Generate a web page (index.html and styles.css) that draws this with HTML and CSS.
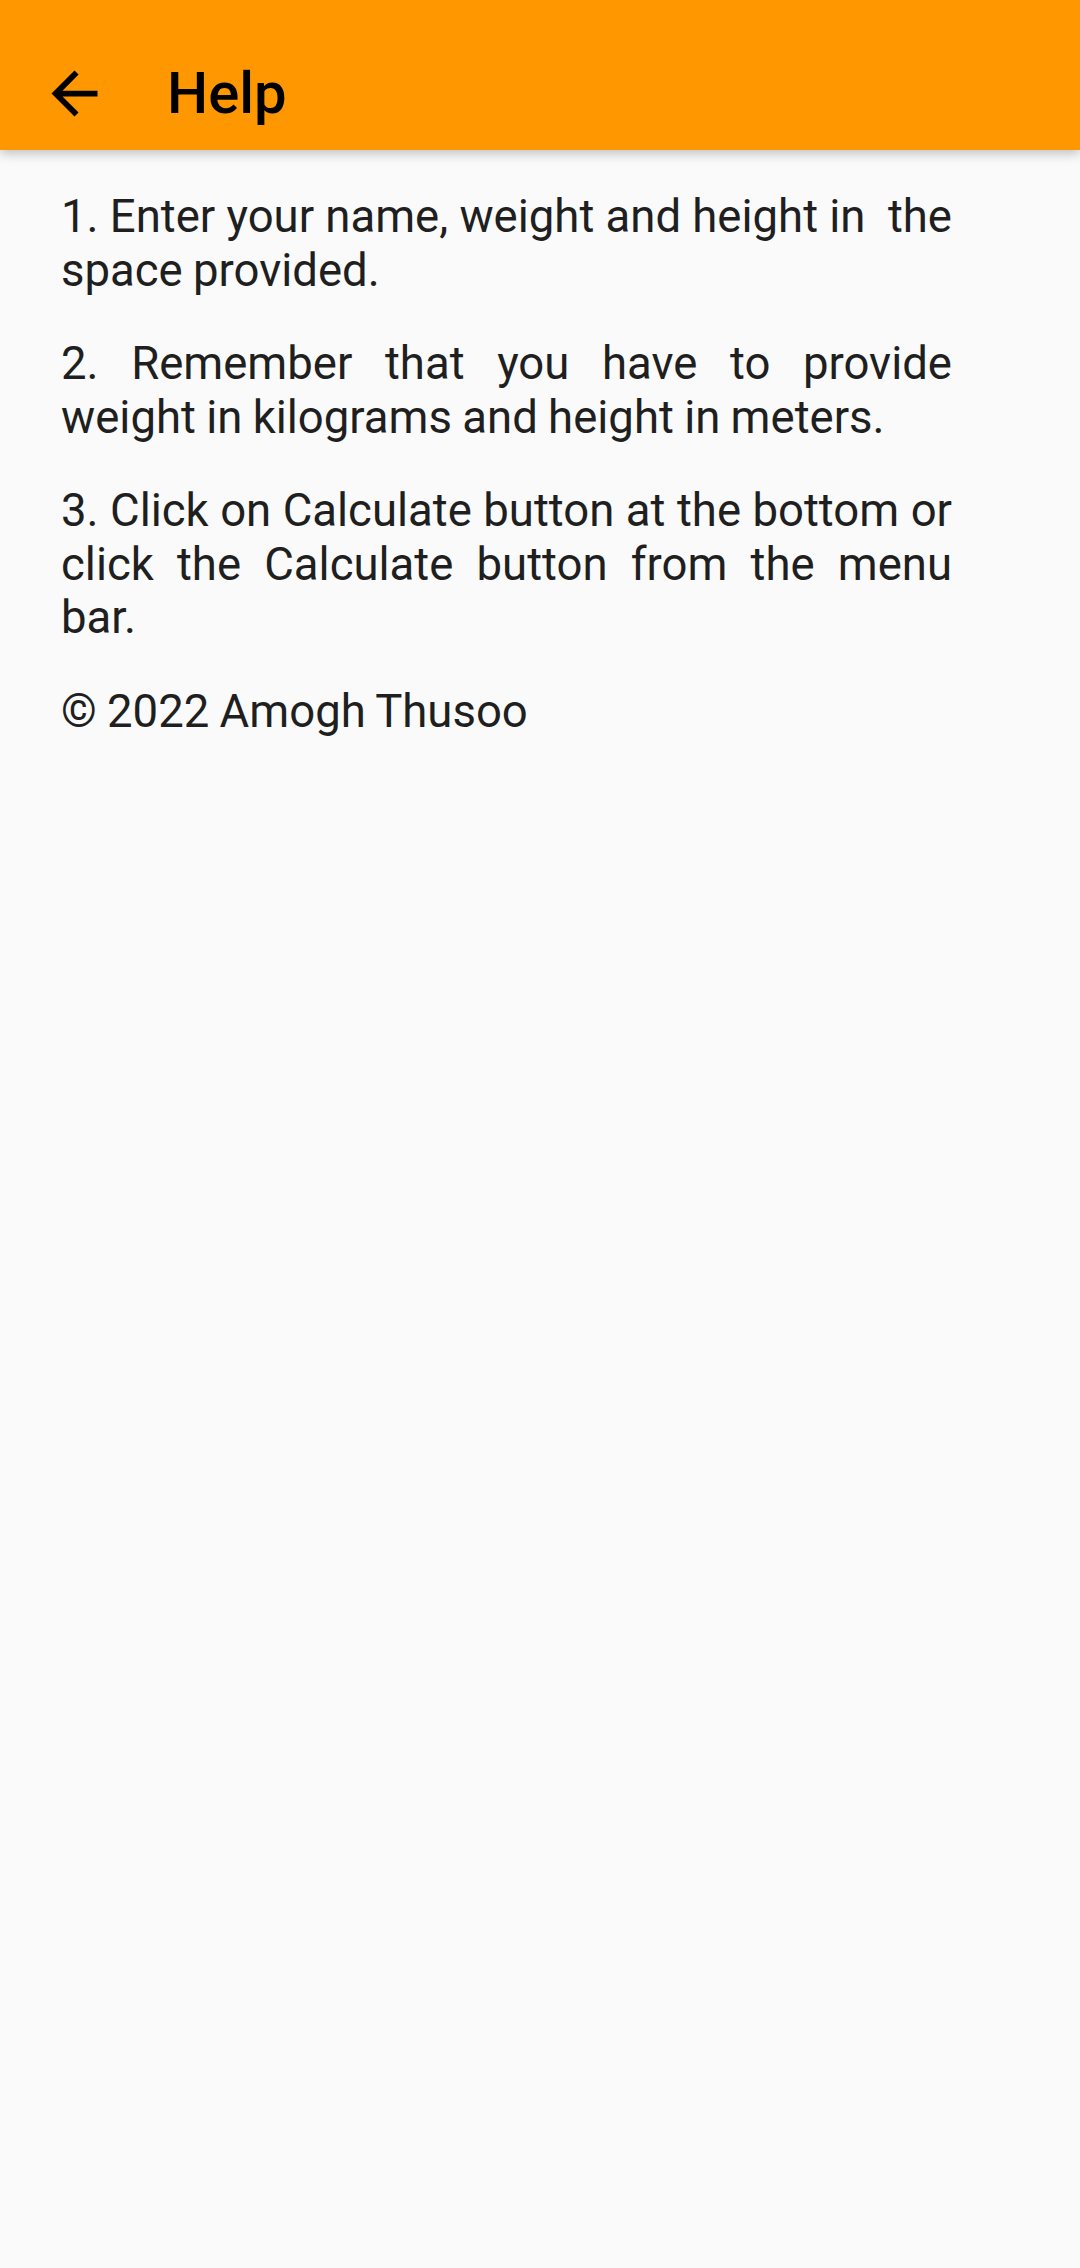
FILE: index.html
```html
<!DOCTYPE html>
<html lang="en">
<head>
<meta charset="utf-8">
<title>Help</title>
<link rel="stylesheet" href="styles.css">
</head>
<body>
<header class="appbar">
  <button class="back" aria-label="Back">
    <svg viewBox="0 0 24 24" width="69" height="69"><path d="M20 11H7.83l5.59-5.59L12 4l-8 8 8 8 1.41-1.41L7.83 13H20v-2z" fill="#000"/></svg>
  </button>
  <h1 class="title">Help</h1>
</header>
<main class="content">
  <p class="para">1. Enter your name, weight and height in&nbsp; the space provided.</p>
  <p class="para">2. Remember that you have to provide weight in kilograms and height in meters.</p>
  <p class="para">3. Click on Calculate button at the bottom or click the Calculate button from the menu bar.</p>
  <p class="para">© 2022 Amogh Thusoo</p>
</main>
</body>
</html>
```
FILE: styles.css
```css
html, body {
  margin: 0;
  padding: 0;
}
body {
  width: 1080px;
  height: 2268px;
  background: #fafafa;
  font-family: Roboto, "Noto Sans", sans-serif;
  overflow: hidden;
}
.appbar {
  position: relative;
  z-index: 1;
  height: 150px;
  background: #ff9800;
  display: flex;
  align-items: center;
  box-shadow: 0 4px 10px rgba(0, 0, 0, 0.22);
}
.back {
  margin: 0 0 0 40px;
  padding: 0;
  border: 0;
  background: none;
  width: 69px;
  height: 69px;
  display: flex;
  align-items: center;
  justify-content: center;
  margin-top: 36px;
}
.back svg {
  display: block;
}
.title {
  margin: 0 0 0 58px;
  margin-top: 36px;
  font-size: 58px;
  font-weight: 500;
  color: #000;
  line-height: 1;
}
.content {
  padding: 40px 0 0 61px;
  width: 891px;
}
.para {
  margin: 0 0 40px;
  font-size: 45.5px;
  line-height: 53.5px;
  word-spacing: -1px;
  color: #1f1f1f;
  text-align: justify;
}
```
